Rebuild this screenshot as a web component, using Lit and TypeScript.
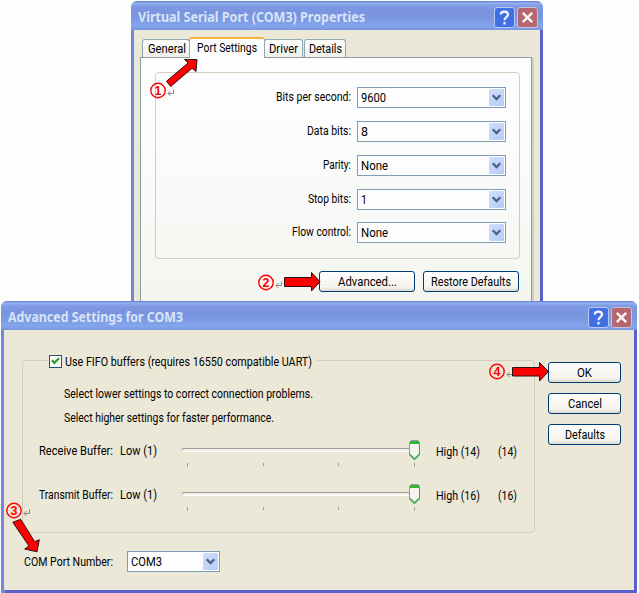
import { LitElement, html, css, svg } from "lit";
import { customElement, property } from "lit/decorators.js";

/** Single line of text condensed or stretched horizontally to a given width. */
@customElement("fit-text")
class FitText extends LitElement {
  @property({ type: Number }) w = 50;
  static styles = css`
    :host { display: inline-block; flex: none; white-space: nowrap; line-height: 16px; height: 16px; }
    .t { display: inline-block; transform-origin: 0 50%; }
  `;
  render() {
    return html`<span class="t"><slot></slot></span>`;
  }
  firstUpdated() {
    const t = this.renderRoot.querySelector(".t") as HTMLElement;
    const natural = t.getBoundingClientRect().width;
    this.style.width = `${this.w}px`;
    if (natural > 0) t.style.transform = `scaleX(${this.w / natural})`;
  }
}

@customElement("xp-combo")
class XpCombo extends LitElement {
  @property() value = "";
  @property({ type: Number }) w = 10;
  static styles = css`
    :host { display: flex; box-sizing: border-box; height: 21px; border: 1px solid #7f9db9; background: #fdfdfd;
      align-items: center; justify-content: space-between; padding: 0 1px 0 3px; }
    .drop { width: 15px; height: 17px; border-radius: 1px; display: block;
      background: linear-gradient(135deg, #d2defb, #b4cbf8); }
  `;
  render() {
    return html`<fit-text .w=${this.w}>${this.value}</fit-text>
      <svg class="drop" viewBox="0 0 15 17"><path d="M3.7 6.2L7.5 10L11.3 6.2" fill="none" stroke="#4d6185" stroke-width="2.3"/></svg>`;
  }
}

@customElement("xp-button")
class XpButton extends LitElement {
  @property() label = "";
  @property({ type: Number }) w = 10;
  static styles = css`
    :host { display: flex; box-sizing: border-box; height: 21px; border: 1px solid #003c74; border-radius: 3px;
      align-items: center; justify-content: center; background: linear-gradient(#fefefd, #f4f3ee 80%, #dcd7ce); }
  `;
  render() {
    return html`<fit-text .w=${this.w}>${this.label}</fit-text>`;
  }
}

@customElement("xp-titlebar")
class XpTitlebar extends LitElement {
  @property() label = "";
  @property({ type: Number }) w = 10;
  static styles = css`
    :host { display: flex; box-sizing: border-box; height: 29px; padding: 3px 5px 0 7px; border-radius: 6px 6px 0 0;
      justify-content: space-between; align-items: center;
      background: linear-gradient(#5f7bd0 0, #95b0ee 2px, #7f9be4 5px, #7a94df 10px, #7b98e2 18px, #83a6ec 25px, #7a93e0 29px);
      color: #d8e4f8; font: bold 14px "Noto Sans", sans-serif; }
    .tools { display: flex; gap: 2px; }
    svg { display: block; width: 21px; height: 21px; }
    .name { padding-bottom: 1px; }
  `;
  render() {
    return html`<fit-text class="name" .w=${this.w}>${this.label}</fit-text>
      <div class="tools">
        <svg viewBox="0 0 21 21"><rect x=".5" y=".5" width="20" height="20" rx="2.5" fill="#4270e4" stroke="#b9c9f3"/>
          <path d="M6.8 7.6C6.8 3.6 14 3.6 14 7.6C14 10.2 10.5 10 10.5 13.2M10.5 15v2.4" fill="none" stroke="#f4f7ff" stroke-width="2.2"/></svg>
        <svg viewBox="0 0 21 21"><rect x=".5" y=".5" width="20" height="20" rx="2.5" fill="#b5666f" stroke="#c9bfdf"/>
          <path d="M5.8 5.8L15.2 15.2M15.2 5.8L5.8 15.2" fill="none" stroke="#fdf6f6" stroke-width="2.4"/></svg>
      </div>`;
  }
}

@customElement("xp-slider")
class XpSlider extends LitElement {
  static styles = css`:host, svg { display: block; width: 240px; height: 28px; }`;
  render() {
    return html`<svg viewBox="0 0 240 28">
      <path d="M0 11V8.5H228" fill="none" stroke="#9d9c99"/>
      <path d="M1 10H228" stroke="#f1efe6" stroke-width="2"/>
      <path d="M1 11.5H228" stroke="#fffffb"/>
      ${[5.5, 81.5, 156.5, 232.5].map((x, i) => svg`<path d="M${x} 23v${i === 0 || i === 3 ? 4 : 3}" stroke="#a19f92"/>`)}
      <path d="M227.5 2.5L229 .5H236L237.5 2.5V15L232.5 20L227.5 15Z" fill="#f5f4f1" stroke="#8e9ca8"/>
      <path d="M237.5 3V14.5" stroke="#71808c"/>
      <path d="M228 1H237V4H228Z" fill="#36b538"/>
      <path d="M228 14.5L232.5 19L237 14.5" fill="none" stroke="#36a843" stroke-width="1.3"/>
    </svg>`;
  }
}

@customElement("app-root")
class AppRoot extends LitElement {
  static styles = css`
    :host { display: block; position: relative; width: 639px; height: 593px; overflow: hidden; background: #fdfdfd;
      font: 12.5px Roboto, "Liberation Sans", sans-serif; color: #000; }
    .window { position: absolute; box-sizing: border-box; display: flex; flex-direction: column;
      border-radius: 7px 7px 0 0; background: linear-gradient(90deg, #7388dc 0 4px, #5a61cb 4px); }
    .props { left: 131px; top: 1px; width: 412px; height: 310px; }
    .adv { left: 1px; top: 301px; width: 636px; height: 292px; }
    .body { flex: 1; margin: 0 3px; background: #ebe8d8; box-sizing: border-box; }
    .props .body { padding: 7px 8px 0 6px; display: flex; flex-direction: column; }
    .tabs { display: flex; align-items: flex-end; height: 20px; padding-left: 2px; flex: none; }
    .tab { box-sizing: border-box; height: 18px; border: 1px solid #91a7b4; border-bottom: 0; border-radius: 3px 3px 0 0;
      background: linear-gradient(#fdfdfd, #f1f0e9); display: flex; align-items: center; justify-content: center; padding-top: 1px; }
    .general { width: 48px; padding-left: 1px; }
    .driver { width: 39px; }
    .details { width: 42px; margin-left: 1px; }
    .tab.active { width: 76px; height: 21px; border-top: 2px solid #f6b13c; background: #fdfdfd; z-index: 1;
      margin: 0 -1px -1px; padding: 0 0 2px; }
    .page { flex: 1; border: 1px solid #919b9c; border-bottom: 0; background: linear-gradient(#fdfdfd 20%, #f4f4f0);
      box-shadow: 2px 1px 0 #d3d0c0; padding: 14px 11px 0 14px; }
    .group { box-sizing: border-box; border: 1px solid #cfcfbc; border-radius: 4px; }
    .port { height: 187px; padding: 14px 13px 0 0; display: grid; grid-template-columns: 1fr 149px;
      grid-template-rows: 34px 34px 34px 33px 21px; column-gap: 6px; }
    .label { justify-self: end; padding-top: 2px; }
    .actions { display: flex; justify-content: flex-end; gap: 8px; padding: 12px 1px 0 0; }
    .actions xp-button { width: 96px; }
    .adv .body { margin-bottom: 3px; display: grid; grid-template-columns: 513px 73px; column-gap: 13px;
      padding: 30px 0 0 18px; align-content: start; }
    .fifo { height: 173px; }
    .legend { display: flex; gap: 3px; width: 268px; height: 16px; margin: -8px 0 0 25px; padding-left: 1px;
      background: #ebe8d8; align-items: center; }
    .legend svg { display: block; width: 13px; height: 13px; margin-top: 1px; }
    .legend fit-text { margin-top: 1px; }
    .hint { display: block; margin: 0 0 8px 41px; }
    .legend + .hint { margin-top: 17px; }
    .row { display: flex; height: 28px; margin-bottom: 16px; padding-left: 16px; }
    .hint + .row { margin-top: 13px; }
    .row fit-text { margin-top: 4px; }
    .row .low { margin-left: 7px; }
    .row xp-slider { margin-left: 25px; margin-top: 1px; }
    .row .high { margin-left: 14px; margin-top: 5px; }
    .row .cur { margin-left: 18px; margin-top: 5px; }
    .side { display: flex; flex-direction: column; gap: 10px; padding-top: 2px; }
    .com { display: flex; align-items: center; gap: 14px; padding: 18px 0 0 2px; }
    .com xp-combo { width: 93px; }
    .notes { position: absolute; inset: 0; width: 639px; height: 593px; }
    .notes text { font: bold 12.5px "Liberation Sans", sans-serif; fill: #f00; text-anchor: middle; }
  `;

  private field(label: string, lw: number, value: string, vw: number) {
    return html`<fit-text class="label" .w=${lw}>${label}</fit-text><xp-combo .value=${value} .w=${vw}></xp-combo>`;
  }

  private buffer(label: string, lw: number, max: number) {
    return html`<div class="row">
      <fit-text .w=${lw}>${label}</fit-text>
      <fit-text class="low" .w=${37}>Low (1)</fit-text>
      <xp-slider></xp-slider>
      <fit-text class="high" .w=${44}>High (${max})</fit-text>
      <fit-text class="cur" .w=${19}>(${max})</fit-text>
    </div>`;
  }

  private note(n: number, x: number, y: number, rx: number, ry: number) {
    return svg`<circle cx=${x} cy=${y} r="7.2" fill="none" stroke="#f00" stroke-width="1.4"/>
      <text x=${x} y=${y + 4.5}>${n}</text>
      <path d="M${rx + 5.5} ${ry - 4}V${ry}H${rx}M${rx + 2.5} ${ry - 2.5}L${rx} ${ry}L${rx + 2.5} ${ry + 2.5}" fill="none" stroke="#888"/>`;
  }

  render() {
    return html`
      <section class="window props">
        <xp-titlebar label="Virtual Serial Port (COM3) Properties" .w=${227}></xp-titlebar>
        <div class="body">
          <div class="tabs">
            <div class="tab general"><fit-text .w=${38}>General</fit-text></div>
            <div class="tab active"><fit-text .w=${60}>Port Settings</fit-text></div>
            <div class="tab driver"><fit-text .w=${29}>Driver</fit-text></div>
            <div class="tab details"><fit-text .w=${33}>Details</fit-text></div>
          </div>
          <div class="page">
            <div class="group port">
              ${this.field("Bits per second:", 75, "9600", 25)}
              ${this.field("Data bits:", 44, "8", 7)}
              ${this.field("Parity:", 28, "None", 27)}
              ${this.field("Stop bits:", 43, "1", 6)}
              ${this.field("Flow control:", 59, "None", 27)}
            </div>
            <div class="actions">
              <xp-button label="Advanced..." .w=${59}></xp-button>
              <xp-button label="Restore Defaults" .w=${80}></xp-button>
            </div>
          </div>
        </div>
      </section>
      <section class="window adv">
        <xp-titlebar label="Advanced Settings for COM3" .w=${175}></xp-titlebar>
        <div class="body">
          <div class="group fifo">
            <div class="legend">
              <svg viewBox="0 0 13 13"><rect x=".5" y=".5" width="12" height="12" fill="#fbfbf9" stroke="#1c5180"/>
                <path d="M3 5.3L5.3 8L10 3.3" fill="none" stroke="#21a121" stroke-width="2.2"/></svg>
              <fit-text .w=${247}>Use FIFO buffers (requires 16550 compatible UART)</fit-text>
            </div>
            <fit-text class="hint" .w=${249}>Select lower settings to correct connection problems.</fit-text>
            <fit-text class="hint" .w=${210}>Select higher settings for faster performance.</fit-text>
            ${this.buffer("Receive Buffer:", 74, 14)}
            ${this.buffer("Transmit Buffer:", 74, 16)}
          </div>
          <div class="side">
            <xp-button label="OK" .w=${15}></xp-button>
            <xp-button label="Cancel" .w=${34}></xp-button>
            <xp-button label="Defaults" .w=${40}></xp-button>
          </div>
          <div class="com">
            <fit-text .w=${89}>COM Port Number:</fit-text>
            <xp-combo value="COM3" .w=${31}></xp-combo>
          </div>
        </div>
      </section>
      <svg class="notes" viewBox="0 0 639 593">
        ${this.note(1, 158, 90.5, 168, 93.5)}
        ${this.note(2, 266, 282.5, 276, 285.5)}
        ${this.note(3, 14, 510.5, 24, 513.5)}
        ${this.note(4, 497, 371.5, 507, 374.5)}
        <g fill="#f00" stroke="#301010">
          <path d="M197 59.5L184.5 59.5L188 63L166.5 81.2L170.7 86.5L192 68.3L196 71.5Z"/>
          <path d="M284.5 277.5H311.5V272.5L320 281.8L311.5 291V286.5H284.5Z"/>
          <path d="M512.5 367.5H539.5V362.5L548.5 371.5L539.5 381V376H512.5Z"/>
          <path d="M12.8 522.3L20.7 519.3L34.7 541.7L39.3 539.7L37 551.8L24.7 549L29 546Z"/>
        </g>
      </svg>`;
  }
}
